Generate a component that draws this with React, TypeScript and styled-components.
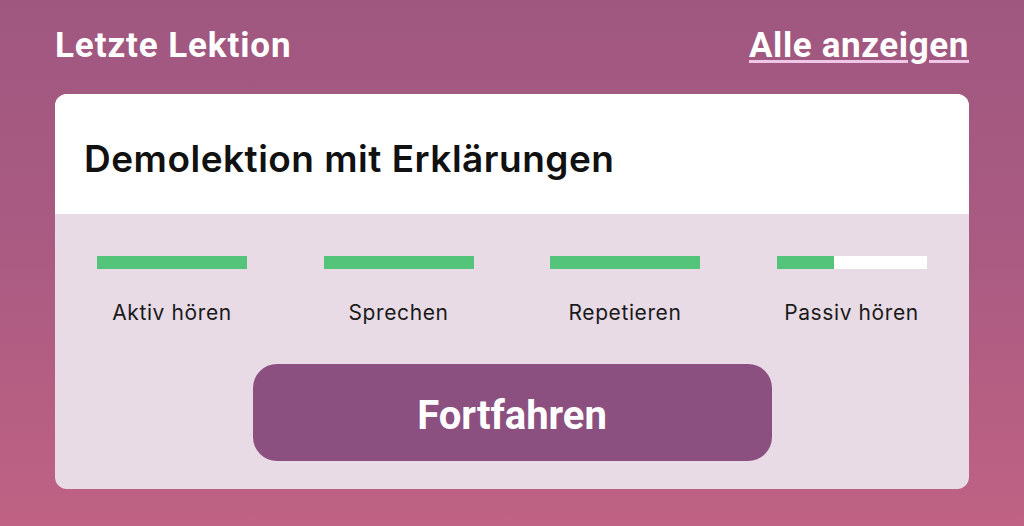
import React from "react";
import styled, { createGlobalStyle } from "styled-components";

const Global = createGlobalStyle`
  html, body { margin: 0; padding: 0; }
  body { width: 1024px; height: 526px; overflow: hidden; }
  #root { height: 100%; }
`;

const Page = styled.div`
  box-sizing: border-box;
  width: 1024px;
  height: 526px;
  background: linear-gradient(180deg, #9f5780 0%, #ab5b82 50%, #bf6283 100%);
  padding: 22px 55px 37px 55px;
  display: flex;
  flex-direction: column;
  gap: 26px;
`;

const Header = styled.div`
  display: flex;
  justify-content: space-between;
  align-items: center;
  height: 46px;
`;

const Heading = styled.h2`
  margin: 0;
  font-family: Roboto, "Liberation Sans", sans-serif;
  font-weight: 700;
  font-size: 35px;
  letter-spacing: 0.9px;
  color: #ffffff;
`;

const ShowAll = styled.a`
  font-family: Roboto, "Liberation Sans", sans-serif;
  font-weight: 700;
  font-size: 35px;
  letter-spacing: 0.6px;
  color: #ffffff;
  text-decoration: underline;
  text-decoration-color: #efc6e6;
  text-decoration-thickness: 3px;
  text-underline-offset: 3px;
  cursor: pointer;
`;

const Card = styled.div`
  flex: 1;
  border-radius: 12px;
  overflow: hidden;
  display: flex;
  flex-direction: column;
  background: #e8dbe6;
`;

const CardTop = styled.div`
  flex-shrink: 0;
  box-sizing: border-box;
  background: #ffffff;
  height: 120px;
  display: flex;
  align-items: center;
  padding: 8px 29px 0 29px;
`;

const Title = styled.h3`
  margin: 0;
  font-family: Inter, "Noto Sans", sans-serif;
  font-weight: 600;
  font-size: 37px;
  letter-spacing: 0.5px;
  color: #111111;
`;

const CardBody = styled.div`
  flex: 1;
  display: flex;
  flex-direction: column;
  align-items: center;
  padding: 42px 42px 28px 42px;
`;

const Steps = styled.div`
  align-self: stretch;
  display: grid;
  grid-template-columns: repeat(4, 150px);
  column-gap: 76.5px;
`;

const Step = styled.div`
  display: flex;
  flex-direction: column;
  align-items: center;
  gap: 32px;
`;

const Track = styled.div`
  width: 150px;
  height: 13px;
  background: #ffffff;
`;

const Fill = styled.div`
  height: 100%;
  background: #55c47b;
`;

const Label = styled.span`
  font-family: Inter, "Noto Sans", sans-serif;
  font-size: 21px;
  font-weight: 400;
  letter-spacing: 0.6px;
  color: #1a1a1a;
  white-space: nowrap;
  line-height: 24px;
`;

const Button = styled.button`
  margin-top: 39px;
  width: 519px;
  height: 97px;
  flex-shrink: 0;
  box-sizing: border-box;
  padding: 5px 0 0 0;
  border: none;
  border-radius: 24px;
  background: #8b5080;
  color: #ffffff;
  font-family: Roboto, "Liberation Sans", sans-serif;
  font-weight: 700;
  font-size: 40px;
  cursor: pointer;
`;

const steps = [
  { label: "Aktiv hören", value: 100 },
  { label: "Sprechen", value: 100 },
  { label: "Repetieren", value: 100 },
  { label: "Passiv hören", value: 38.5 },
];

export default function App() {
  return (
    <>
      <Global />
      <Page>
        <Header>
          <Heading>Letzte Lektion</Heading>
          <ShowAll>Alle anzeigen</ShowAll>
        </Header>
        <Card>
          <CardTop>
            <Title>Demolektion mit Erklärungen</Title>
          </CardTop>
          <CardBody>
            <Steps>
              {steps.map((s) => (
                <Step key={s.label}>
                  <Track>
                    <Fill style={{ width: `${s.value}%` }} />
                  </Track>
                  <Label>{s.label}</Label>
                </Step>
              ))}
            </Steps>
            <Button>Fortfahren</Button>
          </CardBody>
        </Card>
      </Page>
    </>
  );
}
